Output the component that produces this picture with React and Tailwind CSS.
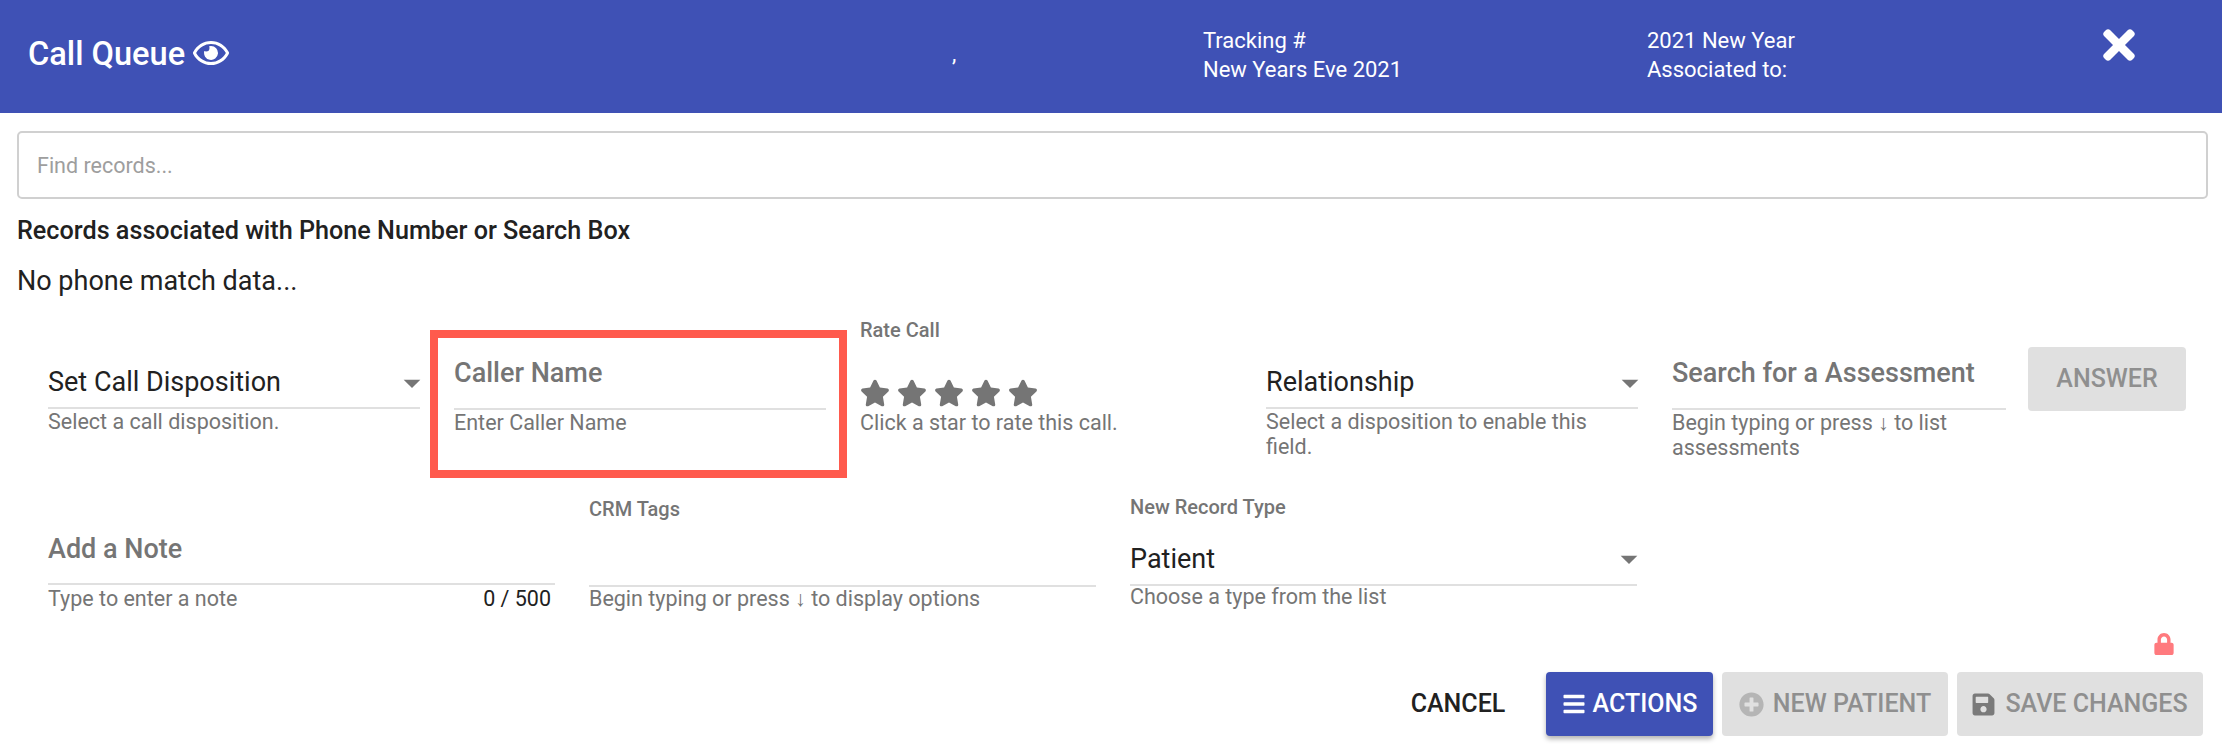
import React from "react";
import { FaRegEye, FaTimes, FaStar, FaLock, FaPlusCircle, FaSave, FaBars } from "react-icons/fa";

function Caret() {
  return (
    <svg viewBox="0 0 24 24" className="w-[40px] h-[40px] -mr-[12px] fill-[#757575] shrink-0">
      <path d="M7 10l5 5 5-5z" />
    </svg>
  );
}

function Field({ value, hint, label, bold, caret, right, topHeight, hintClass = "mt-[1px]", className }) {
  return (
    <div className={className}>
      {label && <div className="text-[20px] leading-[24px] font-medium text-[#757575]">{label}</div>}
      <div className={`flex items-center justify-between border-b-2 border-[#e0e0e0] ${topHeight}`}>
        {value && (
          <span className={bold ? "text-[27px] font-medium text-[#757575]" : "text-[27px] text-[#212121]"}>{value}</span>
        )}
        {caret && <Caret />}
      </div>
      <div className={`flex justify-between text-[21.5px] leading-[25px] text-[#757575] ${hintClass}`}>
        <span>{hint}</span>
        {right && <span className="text-[#212121] pr-[4px]">{right}</span>}
      </div>
    </div>
  );
}

export default function App() {
  return (
    <div className="w-[2222px] h-[750px] bg-white overflow-hidden font-['Roboto',sans-serif] flex flex-col">
      <header className="h-[113px] bg-[#3f51b5] text-white flex items-center shrink-0">
        <div className="w-[952px] pl-[28px] flex items-center gap-[8px] text-[32.6px] font-medium -mt-[4px]">
          <span>Call Queue</span>
          <FaRegEye className="w-[36px] h-[36px] -mt-[3px]" />
        </div>
        <div className="w-[251px] text-[22px] -mt-[6px]">,</div>
        <div className="w-[444px] text-[22px] leading-[29px] -mt-[4px]">
          <div>Tracking #</div>
          <div>New Years Eve 2021</div>
        </div>
        <div className="w-[453px] text-[22px] leading-[29px] -mt-[4px]">
          <div>2021 New Year</div>
          <div>Associated to:</div>
        </div>
        <FaTimes className="w-[38px] h-[46px] -mt-[24px]" />
      </header>

      <main className="flex-1 flex flex-col px-[17px] pt-[18px]">
        <div className="h-[68px] mr-[-3px] border-2 border-[#d0d0d0] rounded-[5px] flex items-center px-[18px] text-[21.5px] text-[#9e9e9e]">
          <span className="mt-[2px]">Find records...</span>
        </div>
        <div className="mt-[18px] text-[25.2px] leading-[28px] font-medium text-[#212121]">
          Records associated with Phone Number or Search Box
        </div>
        <div className="mt-[21px] text-[27px] leading-[30px] text-[#212121]">No phone match data...</div>

        <div className="flex items-start gap-x-[34px] pl-[31px] mt-[22px] h-[166px]">
          <Field className="w-[372px] pt-[34px]" topHeight="h-[57px] pt-[6px]" value="Set Call Disposition" caret hint="Select a call disposition." hintClass="mt-0" />
          <div className="relative w-[372px] pt-[34px]">
            <Field topHeight="h-[58px] pb-[14px]" value="Caller Name" bold hint="Enter Caller Name" hintClass="mt-0" />
            <div className="absolute -left-[24px] -right-[21px] top-[12px] h-[148px] border-[8px] border-[#ff5a4d]" />
          </div>
          <div className="w-[372px]">
            <div className="text-[20px] leading-[24px] font-medium text-[#757575]">Rate Call</div>
            <div className="flex gap-[7px] mt-[37px] text-[#757575]">
              {[0, 1, 2, 3, 4].map((i) => (
                <FaStar key={i} className="w-[30px] h-[28px]" />
              ))}
            </div>
            <div className="mt-[3px] text-[21.5px] leading-[25px] text-[#757575]">Click a star to rate this call.</div>
          </div>
          <Field className="w-[372px] pt-[34px]" topHeight="h-[57px] pt-[6px]" value="Relationship" caret hint="Select a disposition to enable this field." hintClass="mt-0" />
          <Field className="w-[334px] pt-[34px]" topHeight="h-[58px] pb-[14px]" value="Search for a Assessment" bold hint="Begin typing or press ↓ to list assessments" hintClass="mt-0" />
          <button className="w-[158px] h-[64px] -ml-[12px] mt-[29px] rounded-[4px] bg-[#e0e0e0] text-[#8f8f8f] text-[25px] font-medium">
            ANSWER
          </button>
        </div>

        <div className="flex items-start gap-x-[34px] pl-[31px]">
          <Field className="w-[507px] pt-[17px]" topHeight="h-[84px] pt-[14px]" value="Add a Note" bold right="0 / 500" hint="Type to enter a note" />
          <Field className="w-[507px] pt-[13px]" topHeight="h-[66px]" label="CRM Tags" hint="Begin typing or press ↓ to display options" hintClass="-mt-[1px]" />
          <Field className="w-[507px] pt-[11px]" topHeight="h-[67px] pt-[15px]" label="New Record Type" value="Patient" caret hint="Choose a type from the list" hintClass="-mt-[2px]" />
        </div>

        <div className="mt-auto pb-[14px] flex flex-col items-end pr-[2px]">
          <FaLock className="w-[20px] h-[22px] text-[#ff7a7e] mr-[29px] mb-[17px]" />
          <div className="flex items-center gap-[9px] text-[25px] font-medium">
            <button className="w-[132px] h-[64px] pr-[26px] text-[#212121]">CANCEL</button>
            <button className="w-[167px] h-[64px] rounded-[4px] bg-[#3f51b5] text-white flex items-center justify-center gap-[7px] shadow-[0_3px_5px_rgba(0,0,0,0.3)]">
              <FaBars className="w-[24px] h-[24px]" />
              ACTIONS
            </button>
            <button className="w-[226px] h-[64px] rounded-[4px] bg-[#e0e0e0] text-[#8f8f8f] flex items-center justify-center gap-[9px]">
              <FaPlusCircle className="w-[25px] h-[25px] text-[#b5b5b5]" />
              NEW PATIENT
            </button>
            <button className="w-[246px] h-[64px] rounded-[4px] bg-[#e0e0e0] text-[#8f8f8f] flex items-center justify-center gap-[10px]">
              <FaSave className="w-[23px] h-[25px] text-[#7a7a7a]" />
              SAVE CHANGES
            </button>
          </div>
        </div>
      </main>
    </div>
  );
}
